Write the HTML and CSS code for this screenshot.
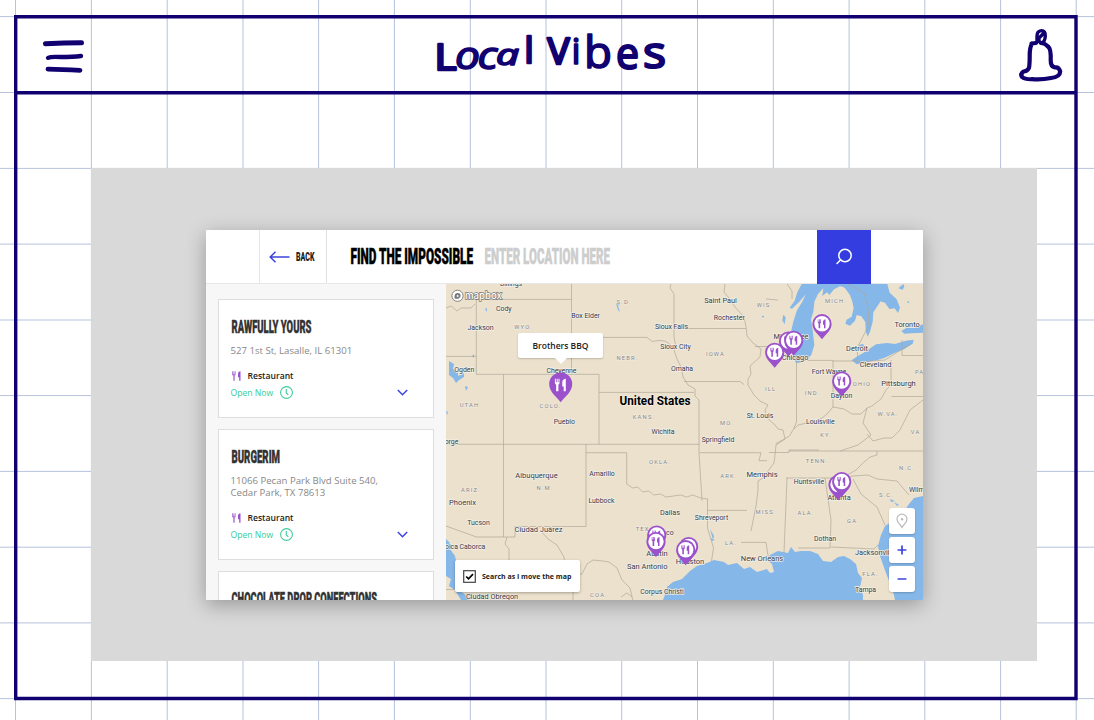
FILE: index.html
```html
<!DOCTYPE html>
<html lang="en">
<head>
<meta charset="utf-8">
<title>Local Vibes</title>
<link rel="stylesheet" href="styles.css">
</head>
<body>
<svg class="backdrop" width="1094" height="720" viewBox="0 0 1094 720" aria-hidden="true">
  <path class="grid" d="M15.5 0V720M91.4 0V720M167.2 0V720M243 0V720M318.6 0V720M394.4 0V720M470.3 0V720M546 0V720M621.7 0V720M697.5 0V720M773.3 0V720M849.1 0V720M924.8 0V720M1000.6 0V720M1076.2 0V720M0 16.6H1094M0 92.5H1094M0 168.4H1094M0 244.1H1094M0 320H1094M0 395.6H1094M0 471.4H1094M0 547.2H1094M0 622.9H1094M0 698.6H1094"/>
  <path class="frame" d="M15.7 16.8H1076V698.5H15.7ZM15.7 92.7H1076"/>
</svg>

<header class="topbar">
  <svg class="ink menu" width="44" height="36" viewBox="42 38 44 36">
    <path d="M45.5 43.8 Q64 43 81.5 42.8" stroke-width="5"/>
    <path d="M48 57.8 Q51 56.3 61 57 Q73 57 81 56" stroke-width="4.3"/>
    <path d="M48 69.2 Q62 69.8 80 70.3" stroke-width="4.8"/>
  </svg>
  <svg class="wordmark" width="240" height="60" viewBox="430 25 240 60">
    <text><tspan class="upright heavy" x="432.5" y="69.8" textLength="22" lengthAdjust="spacingAndGlyphs">L</tspan><tspan class="round" x="453" y="69" textLength="25" lengthAdjust="spacingAndGlyphs">o</tspan><tspan class="round" x="475.500" y="69.200" textLength="20" lengthAdjust="spacingAndGlyphs">c</tspan><tspan class="small" x="494" y="65" textLength="23" lengthAdjust="spacingAndGlyphs">a</tspan><tspan class="upright heavy" x="522.5" y="62.500">l</tspan> <tspan class="upright heavy" x="545.5" y="64" textLength="22" lengthAdjust="spacingAndGlyphs">V</tspan><tspan class="upright" x="569.5" y="63.5">i</tspan><tspan class="upright tall" x="582" y="68" textLength="28" lengthAdjust="spacingAndGlyphs">b</tspan><tspan class="upright wide" x="614" y="68.500" textLength="23" lengthAdjust="spacingAndGlyphs">e</tspan><tspan class="upright wide" x="641" y="68" textLength="23" lengthAdjust="spacingAndGlyphs">s</tspan></text>
  </svg>
  <svg class="ink bell" width="48" height="58" viewBox="1017 26 48 58">
    <path stroke-width="4.2" d="M1032 43.5Q1029.500 48 1029.700 56Q1029.700 64 1029 68Q1027 71.500 1023.500 71.500Q1020 74 1022 77Q1025 79.500 1032 79.200Q1042 80 1051 78Q1060 77 1060.200 71.500Q1059 67 1055 67.500Q1050.500 66.500 1050.700 60Q1051 49 1048.500 47Q1045 43 1041 43M1031.500 43.500L1036 43"/>
    <path stroke-width="3.4" d="M1037 42L1037 36Q1037 31 1041.500 30.600Q1045.500 30.600 1045.300 36Q1045 42 1041.500 43Q1038 42 1039 38L1043 34"/>
  </svg>
</header>

<main class="stage">
  <section class="app">
    <div class="searchbar">
      <div class="corner"></div>
      <div class="back">
        <svg width="21" height="12" viewBox="0 0 21 12"><path class="blue-line" d="M20.500 6H1.200M6.500 .8L1.200 6l5.300 5.200"/></svg>
        <svg class="squeeze" width="24" height="14"><text class="head-back" x="0" y="11" textLength="18.500" lengthAdjust="spacingAndGlyphs">BACK</text></svg>
      </div>
      <div class="query">
        <svg class="squeeze" width="134" height="28"><text class="head-find" x="0.500" y="19" textLength="122.500" lengthAdjust="spacingAndGlyphs">FIND THE IMPOSSIBLE</text></svg>
        <svg class="squeeze" width="140" height="28"><text class="head-enter" x="0.500" y="19" textLength="125.500" lengthAdjust="spacingAndGlyphs">ENTER LOCATION HERE</text></svg>
      </div>
      <div class="go">
        <svg width="18" height="18" viewBox="0 0 18 18"><circle cx="10" cy="7.500" r="6.200"/><path d="M5.500 12L2 15.500"/></svg>
      </div>
    </div>

    <div class="content">
      <aside class="results">
        <article class="card first">
          <svg class="squeeze title" width="110" height="18"><text class="head-card" x="0.500" y="14.200" textLength="80" lengthAdjust="spacingAndGlyphs">RAWFULLY YOURS</text></svg>
          <p class="address">527 1st St, Lasalle, IL 61301</p>
          <p class="kind"><svg width="11" height="10" viewBox="0 0 11 10"><use href="#cutlery-row"/></svg>Restaurant</p>
          <div class="status"><span>Open Now</span><svg class="clock" width="13" height="13" viewBox="0 0 13 13"><circle cx="6.500" cy="6.500" r="5.900"/><path d="M6.300 3v4l2 1.900"/></svg><svg class="chevron" width="11" height="7" viewBox="0 0 11 7"><path class="blue-line" d="M.8 1l4.700 4.700L10.200 1"/></svg></div>
        </article>
        <article class="card second">
          <svg class="squeeze title" width="110" height="18"><text class="head-card" x="0.500" y="14.200" textLength="48.500" lengthAdjust="spacingAndGlyphs">BURGERIM</text></svg>
          <p class="address">11066 Pecan Park Blvd Suite 540,<br>Cedar Park, TX 78613</p>
          <p class="kind"><svg width="11" height="10" viewBox="0 0 11 10"><use href="#cutlery-row"/></svg>Restaurant</p>
          <div class="status"><span>Open Now</span><svg class="clock" width="13" height="13" viewBox="0 0 13 13"><circle cx="6.500" cy="6.500" r="5.900"/><path d="M6.300 3v4l2 1.900"/></svg><svg class="chevron" width="11" height="7" viewBox="0 0 11 7"><path class="blue-line" d="M.8 1l4.700 4.700L10.200 1"/></svg></div>
        </article>
        <article class="card third">
          <svg class="squeeze title" width="180" height="18"><text class="head-card" x="0.500" y="14.200" textLength="145.500" lengthAdjust="spacingAndGlyphs">CHOCOLATE DROP CONFECTIONS</text></svg>
        </article>
      </aside>

      <div class="map">
        <svg class="terrain" width="477" height="316" viewBox="446 284 477 316">
          <defs>
            <g id="cutlery-row" class="cutlery-purple">
              <path d="M1 .3h.9v2.500h.5V.3h.9v2.500h.5V.3h.9v3.200q0 1-.9 1.200V9.800H2.200V4.700Q1 4.400 1 3.500z" opacity=".75"/>
              <path d="M9.500 .2V9.800H8.200V6.200H7V2.500Q7.200 .3 9.500 .2z"/>
            </g>
            <g id="utensils">
              <path d="M-4.300-4.500h.7v2.500h.6v-2.500h.7v2.500h.6v-2.500h.7v3q0 .9-.8 1.200V4.500h-1.600V-.300q-.9-.3-.9-1.200z"/>
              <path d="M3.500-4.500V4.500H2V1H1V-2.300Q1.300-4.300 3.500-4.500z"/>
            </g>
            <g id="pin">
              <path class="pin-body" d="M0-9.600A9.600 9.600 0 0 1 9.600 0C9.600 6.500 4.500 9.500 0 15.500C-4.500 9.500-9.600 6.500-9.600 0A9.600 9.600 0 0 1 0-9.600z"/>
              <circle r="7.700" fill="#fff"/>
              <use href="#utensils" class="cutlery-purple"/>
            </g>
          </defs>
          <rect x="446" y="284" width="477" height="316" fill="#ebe1cd"/>

          <g class="water">
            <g transform="translate(760 280) scale(.33333)">
              <path d="M125 12H285L262 24 240 19 222 28 208 45 201 37 187 48 190 25 174 42 163 65 160 95 153 118 158 150 163 195 154 224 143 238 127 247 110 249 101 239 99 195 92 160 100 125 111 91 127 65 137 43 118 65 96 86 89 83 104 62 112 37z"/>
              <path d="M240 12H324L332 35 350 50 363 62 350 82 340 97 338 125 330 155 323 170 317 153 316 126 304 109 290 105 285 122 270 137 256 131 260 119 275 110 281 85 277 65 270 45 255 25z"/>
              <path d="M313 12H382L389 38 410 58 420 83 414 99 404 85 388 87 375 68 361 64 344 48 325 39z"/>
              <path d="M275 241L292 229 311 218 332 204 348 193 381 189 405 192 438 182 461 179 458 191 433 207 405 218 374 233 350 241 316 247 290 253z"/>
              <path d="M424 153L440 143 464 144 472 137 490 133V158L455 160 433 161zM297 195l12-3 5 8-13 4zM70 104l7 8-3 21-7-12zM5 107l8 1-5 6z"/>
              <path d="M415 25l15-13 3 7-5 10zM442 62l7 5-6 3z"/>
            </g>
            <path d="M663 600L666 592 667 587 673 582 682 579 690 571 697 566 707 563 714 560 724 562 728 565 737 563 744 569 750 567 757 572 767 569 770 573 774 572 772 564 767 560 770 555 778 551 788 553 791 547 795 552 801 551 810 551 818 554 823 561 831 562 838 557 844 556 850 559 856 564 858 573 862 578 860 587 863 595 863 600z"/>
            <path d="M923 496L914 498 909 504 903 513 891 522 885 526 881 535 878 546 880 556 886 573 893 591 895 600H923z"/>
            <path d="M446 539L450 543 450 549 455 556 458 569 457 590 463 593 471 600H461L455 590 449 586 451 579 446 576z"/>
            <path d="M449 361l5 3-1 5 5 3 0 4 6-3 0 4-5 3-3 3-3-5-4-3zM485 309l2-1 0 4zM472 356l2-2 0 4zM465 386l3 1-2 4zM446 411l2 1-1 3zM710 538l5 2-3 1zM710 529l4 7-1 4zM616 303l4 1-2 2 2 6-2-2zM890 499l5 2-4 1zM894 502l5 3-2 1z"/>
          </g>

          <g class="borders">
            <path d="M446 308l5-2 6 5 4-3 10 0 4-4M476.300 299.400H571.500M476.300 299V374.300M571.500 284V374.300M446 356.400H476.300M476.300 374.300H599V444M503.500 374.300V537M571.500 337.400H647l5 4 8-1 6 1 9 7M599 392.400H694M446 444.300H699.500M586 444V526.500H515V537H476.500L446 526M586 452.700H626.700V484l6 4 5-1 5 5 6-1 5 4 7-1 5 3 8-1 7-1 6 2 6-2 8 3 7 1H707.500V528l4 13 2 7-2 13"/>
            <path d="M671 284l-1 4 4 6V337l2 10-2 3 3 9 4 8 2 10 5 8 7 4 0 7 4 4V452.700l3 48M675 328.500H746M684 381.500H740l4 3M699.500 452.700H761l-2 8h8M707.500 510.400H747M741 542.400H766l2 13 3 5M725 284l-1 8 5 6 6 9 9 10 2 10 1 9 6 7 8 6-1 8-10 9 1 8-3 5 0 6 6 10 6 6 8 4-3 5 2 8 8 7 3 4 5 1 2 9-9 6-1 10-1 8-6 8-5 7-5 3 0 9-2 16-3 15-2 10"/>
            <path d="M755 346.500H791M796.500 362V422l-3 7-4 7-7 4-7 4M796.500 360.400H833V407l-6 7-5 4-6 3-9 2-9 2-4 4M833 361l20 0 5-1M833 407l11 2 8 5 9 0 6-6 5-2 9-7 5-9 5-5V360M891.500 396.500H923M902 340V355.500H923M867 408l-4 15 8 12-13 10-18 6M789 451H923M769 452.500H789V450H819M867 434l6 7 11-3 8 0 8-8 10-20 13-10M786 478H842l14-8 8-8 6-5 7-2V451M842 478l11-2 15-1 9 4 10 1 10 1 12 14M853 479l8 15 16 13 8 18M787 478l-3 75M825 478l6 42-1 28-32 0M831 547l43 2 4-4M766 299l12 1M787 284l5 7 0 8"/>
            <path d="M848 284l16 9 4 14 1 18-12 23 1 14 27-2 27-17"/>
            <path d="M507 537l-2 7 4 5v12M540 530l8 9 9 6 7 12 1 9M446 589.500H474M573 600v-7l2-18 7-1 5-10 6-4 10 1 6 1 8 6 5 12 8 8 3 13M621 597l6-4 5 4"/>
          </g>

          <g class="states">
            <text x="523.500" y="328.500">WYO.</text><text x="624" y="304">S.D.</text><text x="469.500" y="406.500">UTAH</text><text x="550.500" y="407.500">COLO.</text><text x="627.500" y="360">NEBR.</text><text x="715.500" y="355.800">IOWA</text><text x="644" y="419.300">KANS.</text><text x="727" y="425.300">MO.</text><text x="765" y="306.500">WIS.</text><text x="836" y="302.500">MICH.</text><text x="772" y="390.500">ILL.</text><text x="812.500" y="395">IND.</text><text x="862" y="386">OHIO</text><text x="888" y="415.500">W.VA.</text><text x="826" y="436.500">KY.</text><text x="917" y="434">VA.</text><text x="921" y="374">PA.</text><text x="471" y="492">ARIZ.</text><text x="545" y="490">N.M.</text><text x="660" y="464">OKLA.</text><text x="729" y="477.500">ARK.</text><text x="766" y="514">MISS.</text><text x="806" y="514.500">ALA.</text><text x="853.500" y="522.500">GA.</text><text x="817" y="462.500">TENN.</text><text x="907" y="469.500">N.C.</text><text x="886.500" y="497">S.C.</text><text x="731" y="545">LA.</text><text x="644" y="531">TEX.</text><text x="599" y="596.500">COA.</text><text x="870.500" y="576">FLA.</text>
          </g>

          <g class="cities">
            <text x="511" y="286">Billings</text><text x="503.800" y="310.500">Cody</text><text x="480.500" y="330">Jackson</text><text x="585.500" y="317.800">Box Elder</text><text x="464.300" y="371.500">Ogden</text><text x="561.500" y="373">Cheyenne</text><text x="564.300" y="424.200">Pueblo</text><text x="451.500" y="444">orge</text>
            <text x="720.500" y="302.500" class="big">Saint Paul</text><text x="729.300" y="320">Rochester</text><text x="671.500" y="328.800">Sioux Falls</text><text x="675.500" y="348.500">Sioux City</text><text x="682" y="371.200">Omaha</text><text x="663" y="433.800">Wichita</text><text x="718" y="442">Springfield</text><text x="760" y="417.500">St. Louis</text>
            <text x="791" y="338.800" class="big">Milwaukee</text><text x="795" y="360" class="big">Chicago</text><text x="857" y="351" class="big">Detroit</text><text x="907" y="327" class="big">Toronto</text><text x="875.500" y="366.500" class="big">Cleveland</text><text x="829" y="374">Fort Wayne</text><text x="841.500" y="397.800">Dayton</text><text x="898.500" y="385.500" class="big wider">Pittsburgh</text><text x="820.300" y="424">Louisville</text>
            <text x="536.500" y="478" class="big wider">Albuquerque</text><text x="602" y="476">Amarillo</text><text x="601.500" y="502.500">Lubbock</text><text x="462.500" y="504.500" class="big wider">Phoenix</text><text x="478.500" y="524.500">Tucson</text><text x="538.500" y="532" class="big wider">Ciudad Juárez</text><text x="464" y="548.500">roica Caborca</text><text x="492" y="598.500" class="big">Ciudad Obregon</text>
            <text x="762" y="476.500" class="big wider">Memphis</text><text x="670" y="515" class="big">Dallas</text><text x="711.500" y="519.500">Shreveport</text><text x="665" y="535">Waco</text><text x="657" y="555.500" class="big wider">Austin</text><text x="647.200" y="568.500" class="big wider">San Antonio</text><text x="690" y="563.500" class="big wider">Houston</text><text x="662" y="594">Corpus Christi</text><text x="762" y="560.500" class="big wider">New Orleans</text><text x="809" y="483.500">Huntsville</text><text x="839" y="499.500" class="big">Atlanta</text><text x="825" y="540.500">Dothan</text><text x="855" y="554.500" class="big start">Jacksonville</text><text x="865.500" y="591.500">Tampa</text><text x="909" y="491.800" class="start">Wilmington</text>
            <text x="655" y="405.300" class="country" textLength="71" lengthAdjust="spacingAndGlyphs">United States</text>
          </g>

          <g class="attribution">
            <circle cx="457.500" cy="295.800" r="5.600"/><path d="M454.700 298.600q-1-5 2.600-5.700 3.600 0 3.300 3.100-.8 3.600-5.900 2.600zM457.700 294.200l.5 1.200 1.200.5-1.200.5-.5 1.200-.5-1.200-1.200-.5 1.200-.5z"/>
            <text x="465" y="298.700" textLength="37" lengthAdjust="spacingAndGlyphs">mapbox</text>
          </g>

          <use href="#pin" x="822" y="323.700"/>
          <use href="#pin" x="788.500" y="341"/><use href="#pin" x="793.700" y="340.300"/><use href="#pin" x="774.700" y="352.300"/>
          <use href="#pin" x="841.700" y="381"/>
          <use href="#pin" x="656.700" y="535"/><use href="#pin" x="656" y="541.500"/>
          <use href="#pin" x="688.600" y="546.500"/><use href="#pin" x="685.700" y="549.700"/>
          <use href="#pin" x="838" y="484.500"/><use href="#pin" x="841.700" y="481.500"/>
          <path class="pin-body" d="M560.700 372.500a11.500 11.500 0 0 1 11.500 11.500c0 7.500-6 11.500-11.500 18.200c-5.500-6.700-11.500-10.700-11.500-18.200a11.500 11.500 0 0 1 11.500-11.500z"/>
          <g transform="translate(560.900 385) scale(1.400)" fill="#fff"><use href="#utensils"/></g>
        </svg>
        <div class="tooltip">Brothers BBQ</div>
        <div class="follow"><svg width="13" height="13" viewBox="0 0 13 13"><rect x=".7" y=".7" width="11.600" height="11.600"/><path d="M3.200 6.500l2.300 2.300 4.500-4.700"/></svg>Search as I move the map</div>
        <div class="controls">
          <div class="control"><svg width="14" height="16" viewBox="0 0 14 16"><path class="locate" d="M7 1.200a5 5 0 0 1 5 5c0 3.300-3 4.500-5 8.300-2-3.800-5-5-5-8.300a5 5 0 0 1 5-5z"/><circle cx="7" cy="6.300" r="1.200" fill="#bbb"/></svg></div>
          <div class="control"><svg width="10" height="10" viewBox="0 0 10 10"><path class="zoom-mark" d="M5 .6v8.800M.6 5h8.800"/></svg></div>
          <div class="control"><svg width="10" height="10" viewBox="0 0 10 10"><path class="zoom-mark" d="M.6 5h8.800"/></svg></div>
        </div>
      </div>
    </div>
  </section>
</main>
</body>
</html>
```
FILE: styles.css
```css
* { box-sizing: border-box; }
body {
  margin: 0;
  width: 1094px;
  height: 720px;
  overflow: hidden;
  background: #fff;
  font-family: "Open Sans", "Noto Sans", sans-serif;
}
svg { display: block; flex: none; }
p { margin: 0; }

.backdrop { position: absolute; inset: 0; z-index: -1; }
.grid { stroke: #b5c3dd; stroke-width: 1; fill: none; }
.frame { stroke: #11006f; stroke-width: 3.4; fill: none; }

.topbar {
  height: 92px;
  padding: 25px 29px 0 42px;
  display: flex;
  justify-content: space-between;
  align-items: flex-start;
}
.ink path { fill: none; stroke: #11006f; stroke-linecap: round; stroke-linejoin: round; }
.menu { margin-top: 13px; }
.bell { margin-top: 1px; }
.wordmark text {
  font: italic 500 36px "Open Sans", sans-serif;
  fill: #11006f;
  stroke: #11006f;
  stroke-width: 1.6;
  stroke-linejoin: round;
}
.wordmark .upright { font-style: normal; }
.wordmark .heavy { stroke-width: 2.6; }
.wordmark .round { font-size: 39px; font-weight: 400; }
.wordmark .small { font-size: 29px; }
.wordmark .tall { font-size: 44px; font-weight: 400; }
.wordmark .wide { font-size: 44px; font-weight: 400; stroke-width: 2.2; }

.stage {
  width: 946px;
  height: 493px;
  margin: 76px 0 0 91px;
  padding: 62px 0 0 115px;
  background: #d9d9d9;
}
.app {
  width: 717px;
  height: 370px;
  background: #fff;
  overflow: hidden;
  box-shadow: 0 5px 20px rgba(0, 0, 0, .3);
  border-radius: 1px;
}

.searchbar { height: 54px; display: flex; border-bottom: 1px solid #e7e7e7; }
.corner { width: 54px; border-right: 1px solid #e7e7e7; }
.back {
  width: 67px;
  border-right: 1px solid #e0e0e0;
  display: flex;
  align-items: center;
  gap: 6px;
  padding-left: 9px;
}
.query { width: 490px; padding: 15px 0 0 23px; display: flex; }
.go { width: 54px; height: 54px; background: #343ee0; display: grid; place-items: center; }
.go circle, .go path { fill: none; stroke: #fff; stroke-width: 1.5; stroke-linecap: round; }
.blue-line { fill: none; stroke: #3d43dc; stroke-width: 1.5; }

.squeeze { overflow: visible; }
.squeeze text { font-family: Roboto, sans-serif; font-weight: 900; }
.head-back { font-size: 12px; fill: #222; }
.head-find { font-size: 22px; fill: #000; stroke: #000; stroke-width: .5; }
.head-enter { font-size: 22px; fill: #cdcdcd; stroke: #cdcdcd; stroke-width: .4; }
.head-card { font-size: 18px; fill: #333; stroke: #333; stroke-width: .4; }

.content { display: flex; height: 316px; }
.results {
  width: 240px;
  height: 316px;
  padding: 15px 12px 0;
  display: flex;
  flex-direction: column;
  gap: 11px;
  background: #f7f7f7;
  overflow: hidden;
}
.card {
  flex: none;
  width: 216px;
  border: 1px solid #dedede;
  background: #fff;
  padding: 19px 11px 0 11.500px;
  color: #888;
  line-height: 12px;
}
.first { height: 119px; }
.second { height: 131px; }
.third { height: 119px; }
.address { margin-top: 8px; white-space: nowrap; font-size: 9.600px; }
.kind {
  display: flex;
  align-items: center;
  gap: 6px;
  margin-top: 13px;
  font-size: 8.600px;
  font-weight: 600;
  color: #222;
}
.cutlery-purple { fill: #9b51cc; }
.status { display: flex; align-items: center; margin-top: 4px; color: #35cc96; font-size: 8.600px; }
.clock { margin-left: 7px; }
.clock * { fill: none; stroke: #40cc9c; stroke-width: 1.100; }
.chevron { margin-left: auto; margin-right: 14px; }

.map { position: relative; width: 477px; height: 316px; }
.water { fill: #85b7e8; }
.borders { fill: none; stroke: #b0a799; stroke-width: .7; stroke-linejoin: round; }
.states text {
  font: 5.800px Roboto, sans-serif;
  letter-spacing: 1.200px;
  fill: #85858a;
  text-anchor: middle;
  paint-order: stroke;
  stroke: #f4eee2;
  stroke-width: 1px;
}
.cities text {
  font: 6.900px Roboto, sans-serif;
  fill: #343b4b;
  text-anchor: middle;
  paint-order: stroke;
  stroke: #f5f0e7;
  stroke-width: 1.400px;
  stroke-linejoin: round;
}
.cities .big { font-size: 7.300px; }
.cities .wider { font-size: 7.500px; }
.cities .start { text-anchor: start; }
.cities .country { font-size: 12px; font-weight: 700; fill: #000; }
.attribution circle { fill: #fff; stroke: #777; stroke-width: .9; }
.attribution path { fill: #777; fill-rule: evenodd; }
.attribution text {
  font: 500 10px Inter, sans-serif;
  fill: #fff;
  stroke: #777;
  stroke-width: 1.400;
  paint-order: stroke;
}
.pin-body { fill: #9b51cc; }

.tooltip {
  position: absolute;
  left: 72px;
  top: 49px;
  width: 85px;
  height: 25px;
  background: #fff;
  border-radius: 2px;
  box-shadow: 0 1px 2px rgba(0, 0, 0, .2);
  color: #222;
  font-size: 8.500px;
  font-weight: 600;
  line-height: 25px;
  text-align: center;
  white-space: nowrap;
}
.tooltip::after {
  content: "";
  position: absolute;
  left: 37px;
  top: 25px;
  border: 6px solid transparent;
  border-top-color: #fff;
  border-bottom: 0;
}
.follow {
  position: absolute;
  left: 9px;
  top: 276px;
  width: 125px;
  height: 32px;
  padding-left: 8px;
  display: flex;
  align-items: center;
  gap: 6px;
  background: #fff;
  border-radius: 2px;
  box-shadow: 0 1px 3px rgba(0, 0, 0, .3);
  color: #222;
  font-size: 7px;
  font-weight: 700;
  white-space: nowrap;
}
.follow rect { fill: #fff; stroke: #444; stroke-width: 1.200; }
.follow path { fill: none; stroke: #000; stroke-width: 1.700; }
.controls { position: absolute; left: 443px; top: 224px; display: grid; gap: 3px; }
.control {
  width: 26px;
  height: 26px;
  display: grid;
  place-items: center;
  background: #fff;
  border-radius: 3px;
  box-shadow: 0 1px 2px rgba(0, 0, 0, .2);
}
.locate { fill: none; stroke: #bbb; stroke-width: 1.200; }
.zoom-mark { fill: none; stroke: #3d43dc; stroke-width: 1.700; }
```
